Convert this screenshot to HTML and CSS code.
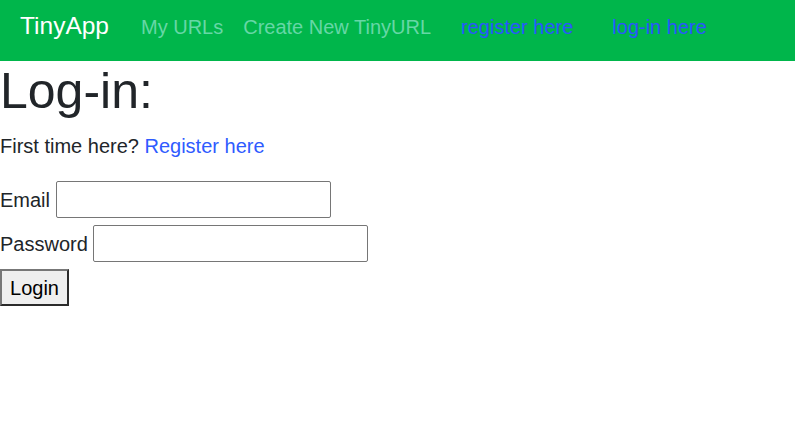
FILE: index.html
```html
<!DOCTYPE html>
<html lang="en">
<head>
<meta charset="utf-8">
<title>TinyApp</title>
<link rel="stylesheet" href="styles.css">
</head>
<body>
<nav class="navbar">
  <a class="brand" href="#">TinyApp</a>
  <a class="nav-link first" href="#">My URLs</a>
  <a class="nav-link" href="#">Create New TinyURL</a>
  <a class="auth-link register" href="#">register here</a>
  <a class="auth-link login-link" href="#">log-in here</a>
</nav>
<main class="content">
  <h1 class="title">Log-in:</h1>
  <p class="intro">First time here? <a class="link" href="#">Register here</a></p>
  <form class="form">
    <div class="row">
      <label class="label" for="email">Email</label>
      <input class="field" id="email" type="text">
    </div>
    <div class="row">
      <label class="label" for="password">Password</label>
      <input class="field" id="password" type="password">
    </div>
    <div class="row">
      <button class="btn" type="button">Login</button>
    </div>
  </form>
</main>
</body>
</html>
```
FILE: styles.css
```css
* { box-sizing: border-box; }
html, body {
  margin: 0;
  padding: 0;
  background: #fff;
}
body {
  font-family: "Liberation Sans", Arial, sans-serif;
  font-size: 20px;
  line-height: 1.5;
  color: #212529;
}
a { text-decoration: none; }

.navbar {
  display: flex;
  align-items: center;
  height: 61px;
  padding: 0 20px 8px;
  background: #00b64b;
}
.brand {
  font-size: 24.5px;
  color: #fff;
  margin-right: 32px;
  line-height: 1;
}
.nav-link {
  color: #66d7a6;
  margin-right: 20px;
  line-height: 1;
}
.auth-link {
  color: #2a55ff;
  line-height: 1;
}
.register { margin-left: 10px; margin-right: 39px; }

.content { padding: 0; }
.title {
  margin: 0 0 10px;
  font-size: 50px;
  font-weight: 400;
  line-height: 1.2;
}
.intro {
  margin: 0 0 20px;
}
.link { color: #2f5bff; }

.form { margin: 0; }
.row {
  display: flex;
  align-items: center;
  margin-bottom: 7px;
}
.label { margin-right: 5.5px; }
.field {
  width: 275px;
  height: 37px;
  border: 1px solid #767676;
  border-radius: 2px;
  font: inherit;
  padding: 1px 2px;
  background: #fff;
}
.btn {
  font: inherit;
  color: #000;
  height: 37px;
  width: 69px;
  padding: 1px 6px;
  background: #efefef;
  border: 2px solid;
  border-color: #777 #2b2b2b #2b2b2b #777;
  border-radius: 0;
}
```
